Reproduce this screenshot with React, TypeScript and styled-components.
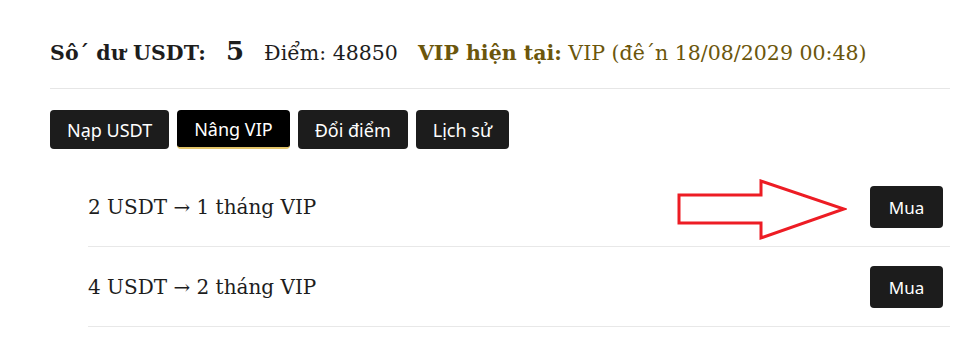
import React from "react";
import { styled, createGlobalStyle } from "styled-components";

const GlobalStyle = createGlobalStyle`
  html, body {
    margin: 0;
    padding: 0;
    background: #ffffff;
  }
  * {
    box-sizing: border-box;
  }
`;

const plans = [
  { usdt: 2, months: 1 },
  { usdt: 4, months: 2 },
];

const tabs = ["Nạp USDT", "Nâng VIP", "Đổi điểm", "Lịch sử"];

export default function App() {
  return (
    <>
      <GlobalStyle />
      <Page>
        <Header>
          <Label>Sô´ dư USDT:</Label>
          <Balance>5</Balance>
          <Plain>Điểm: 48850</Plain>
          <Vip>
            <strong>VIP hiện tại:</strong> VIP (đê´n 18/08/2029 00:48)
          </Vip>
        </Header>
        <Divider />
        <Tabs>
          {tabs.map((t) => (
            <Tab key={t} $active={t === "Nâng VIP"}>
              {t}
            </Tab>
          ))}
        </Tabs>
        <List>
          {plans.map((p) => (
            <Row key={p.usdt}>
              <RowText>
                {p.usdt} USDT → {p.months} tháng VIP
              </RowText>
              <BuyButton>Mua</BuyButton>
            </Row>
          ))}
        </List>
        <Arrow width="170" height="62" viewBox="0 0 170 62">
          <polygon
            points="2,16 84,16 84,2 167,30 84,59 84,44 2,44"
            fill="none"
            stroke="#ed1c24"
            strokeWidth="3"
          />
        </Arrow>
      </Page>
    </>
  );
}

const Page = styled.div`
  position: relative;
  width: 968px;
  height: 337px;
  padding: 36px 18px 0 50px;
  font-family: "DejaVu Serif", "Liberation Serif", serif;
  color: #1d1d1d;
  overflow: hidden;
`;

const Header = styled.div`
  display: flex;
  align-items: baseline;
  gap: 20px;
  height: 42px;
  font-size: 20.5px;
`;

const Label = styled.span`
  font-weight: 700;
  letter-spacing: 0.1px;
`;

const Balance = styled.span`
  font-weight: 700;
  font-size: 26px;
`;

const Plain = styled.span``;

const Vip = styled.span`
  color: #6b560c;

  strong {
    font-weight: 700;
  }
`;

const Divider = styled.div`
  height: 1px;
  background: #e6e6e6;
  margin-top: 10px;
`;

const Tabs = styled.div`
  display: flex;
  gap: 8px;
  margin-top: 21px;
`;

const Tab = styled.button<{ $active?: boolean }>`
  height: 39px;
  padding: 0 17px;
  border: none;
  border-radius: 4px;
  background: ${(p) => (p.$active ? "#000000" : "#1c1c1c")};
  border-bottom: ${(p) => (p.$active ? "2px solid #e2c46a" : "none")};
  color: #ffffff;
  font-family: "Noto Sans", sans-serif;
  font-size: 18px;
  cursor: pointer;
`;

const List = styled.div`
  margin-top: 18px;
  margin-left: 38px;
`;

const Row = styled.div`
  display: flex;
  align-items: center;
  justify-content: space-between;
  padding: 19px 7px 18px 0;
  border-bottom: 1px solid #e8e8e8;
`;

const RowText = styled.span`
  font-size: 20px;
`;

const BuyButton = styled.button`
  height: 42px;
  width: 73px;
  border: none;
  border-radius: 4px;
  background: #1c1c1c;
  color: #ffffff;
  font-family: "Noto Sans", sans-serif;
  font-size: 17px;
  cursor: pointer;
`;

const Arrow = styled.svg`
  position: absolute;
  left: 677px;
  top: 179px;
`;
